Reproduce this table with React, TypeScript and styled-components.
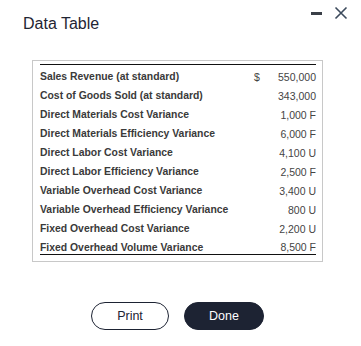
import React from 'react';
import styled, { createGlobalStyle } from 'styled-components';

interface Row {
  label: string;
  currency?: string;
  amount: string;
}

const rows: Row[] = [
  { label: 'Sales Revenue (at standard)', currency: '$', amount: '550,000' },
  { label: 'Cost of Goods Sold (at standard)', amount: '343,000' },
  { label: 'Direct Materials Cost Variance', amount: '1,000 F' },
  { label: 'Direct Materials Efficiency Variance', amount: '6,000 F' },
  { label: 'Direct Labor Cost Variance', amount: '4,100 U' },
  { label: 'Direct Labor Efficiency Variance', amount: '2,500 F' },
  { label: 'Variable Overhead Cost Variance', amount: '3,400 U' },
  { label: 'Variable Overhead Efficiency Variance', amount: '800 U' },
  { label: 'Fixed Overhead Cost Variance', amount: '2,200 U' },
  { label: 'Fixed Overhead Volume Variance', amount: '8,500 F' },
];

const GlobalStyle = createGlobalStyle`
  body {
    margin: 0;
    background: #ffffff;
    font-family: 'Liberation Sans', Arial, sans-serif;
  }
`;

export default function App() {
  return (
    <>
      <GlobalStyle />
      <Dialog>
        <Header>
          <Title>Data Table</Title>
          <Controls>
            <Minimize aria-label="minimize" />
            <svg width="14" height="14" viewBox="0 0 14 14" aria-label="close">
              <path d="M1.5 1.5 L12.5 12.5 M12.5 1.5 L1.5 12.5" stroke="#3c4a5c" strokeWidth="1.6" fill="none" />
            </svg>
          </Controls>
        </Header>

        <TableBox>
          <Table>
            {rows.map((row, index) => (
              <TableRow key={index} $last={index === rows.length - 1}>
                <Label>{row.label}</Label>
                <Currency>{row.currency}</Currency>
                <Amount>{row.amount}</Amount>
              </TableRow>
            ))}
          </Table>
        </TableBox>

        <Actions>
          <OutlineButton>Print</OutlineButton>
          <SolidButton>Done</SolidButton>
        </Actions>
      </Dialog>
    </>
  );
}

const Dialog = styled.div`
  width: 361px;
  height: 346px;
  display: flex;
  flex-direction: column;
  box-sizing: border-box;
`;

const Header = styled.div`
  display: flex;
  justify-content: space-between;
  align-items: flex-start;
  padding: 0 13px 0 23px;
`;

const Title = styled.h1`
  margin: 14px 0 0 0;
  font-size: 16px;
  line-height: 19px;
  font-weight: 400;
  color: #1f2533;
`;

const Controls = styled.div`
  display: flex;
  align-items: center;
  gap: 12px;
  padding-top: 6px;
`;

const Minimize = styled.span`
  display: block;
  width: 11px;
  height: 3px;
  background: #3a3f47;
`;

const TableBox = styled.div`
  margin: 27px 0 0 32px;
  width: 291px;
  box-sizing: border-box;
  border: 1px solid #c8c8c8;
  padding: 3px 6px 6px 7px;
`;

const Table = styled.div`
  border-top: 1px solid #111111;
`;

const TableRow = styled.div<{ $last: boolean }>`
  display: grid;
  grid-template-columns: 1fr 16px 46px;
  align-items: center;
  height: 19px;
  box-sizing: border-box;
  padding-top: 4px;
  border-bottom: ${(p) => (p.$last ? '1px solid #111111' : 'none')};
`;

const Label = styled.span`
  font-size: 10.4px;
  font-weight: 700;
  color: #3a3a3a;
  white-space: nowrap;
`;

const Currency = styled.span`
  font-size: 10.5px;
  color: #444444;
`;

const Amount = styled.span`
  font-size: 10.5px;
  color: #444444;
  text-align: right;
  white-space: nowrap;
`;

const Actions = styled.div`
  display: flex;
  justify-content: center;
  gap: 15px;
  margin-top: 40px;
  padding-right: 6px;
`;

const OutlineButton = styled.button`
  width: 78px;
  height: 28px;
  box-sizing: border-box;
  border: 1.5px solid #1d2333;
  border-radius: 14px;
  background: #ffffff;
  color: #1d2333;
  font-family: 'Liberation Sans', Arial, sans-serif;
  font-size: 12.5px;
`;

const SolidButton = styled(OutlineButton)`
  width: 80px;
  background: #1d2333;
  color: #ffffff;
`;
